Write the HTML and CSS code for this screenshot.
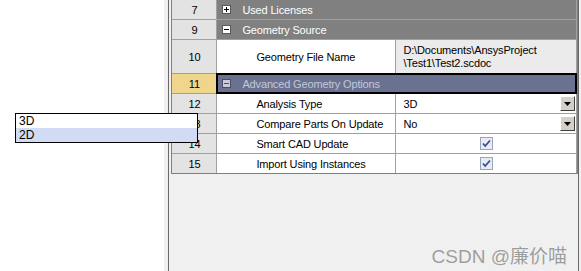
FILE: index.html
```html
<!DOCTYPE html>
<html lang="en">
<head>
    <meta charset="UTF-8">
    <title>Geometry Properties</title>
    <link rel="stylesheet" href="styles.css">
</head>
<body>
    <div class="page">
        <div class="blank"></div>
        <div class="gutter"></div>
        <div class="panel">
            <div class="grid">
                <div class="num">7</div>
                <div class="group">
                    <svg class="toggle" width="9" height="9" viewBox="0 0 9 9"><rect x="0.5" y="0.5" width="8" height="8" fill="#fff" stroke="#5a5a5a"/><path d="M2 4.5h5M4.5 2v5" stroke="#000"/></svg>
                    Used Licenses
                </div>

                <div class="num">9</div>
                <div class="group">
                    <svg class="toggle" width="9" height="9" viewBox="0 0 9 9"><rect x="0.5" y="0.5" width="8" height="8" fill="#fff" stroke="#5a5a5a"/><path d="M2 4.5h5" stroke="#000"/></svg>
                    Geometry Source
                </div>

                <div class="num">10</div>
                <div class="name">Geometry File Name</div>
                <div class="value readonly">D:\Documents\AnsysProject<br>\Test1\Test2.scdoc</div>

                <div class="num current">11</div>
                <div class="group selected">
                    <svg class="toggle" width="9" height="9" viewBox="0 0 9 9"><rect x="0.5" y="0.5" width="8" height="8" fill="#c9ccd8" stroke="#4a4f66"/><path d="M2 4.5h5" stroke="#4a4f66"/></svg>
                    Advanced Geometry Options
                </div>

                <div class="num">12</div>
                <div class="name">Analysis Type</div>
                <div class="value">3D<span class="drop"><svg width="7" height="4" viewBox="0 0 7 4"><path d="M0 0h7L3.5 4z" fill="#000"/></svg></span></div>

                <div class="num">13</div>
                <div class="name">Compare Parts On Update</div>
                <div class="value">No<span class="drop"><svg width="7" height="4" viewBox="0 0 7 4"><path d="M0 0h7L3.5 4z" fill="#000"/></svg></span></div>

                <div class="num">14</div>
                <div class="name">Smart CAD Update</div>
                <div class="value center">
                    <svg width="13" height="13" viewBox="0 0 13 13"><rect x="0.5" y="0.5" width="12" height="12" fill="#e9ebf2" stroke="#9aa3b8"/><path d="M3 6.5l2.2 2.5L10 3.5" fill="none" stroke="#2f4f9e" stroke-width="1.8"/></svg>
                </div>

                <div class="num">15</div>
                <div class="name">Import Using Instances</div>
                <div class="value center">
                    <svg width="13" height="13" viewBox="0 0 13 13"><rect x="0.5" y="0.5" width="12" height="12" fill="#e9ebf2" stroke="#9aa3b8"/><path d="M3 6.5l2.2 2.5L10 3.5" fill="none" stroke="#2f4f9e" stroke-width="1.8"/></svg>
                </div>
            </div>
            <div class="watermark">CSDN @廉价喵</div>
        </div>
        <div class="edge"></div>

        <!-- open list of the Analysis Type cell -->
        <ul class="popup">
            <li>3D</li>
            <li class="hover">2D</li>
        </ul>
    </div>
</body>
</html>
```

FILE: styles.css
```css
body {
    margin: 0;
    font-family: "Liberation Sans", Arial, sans-serif;
    font-size: 11px;
    color: #000;
}

.page {
    position: relative;
    display: flex;
    width: 581px;
    height: 271px;
    overflow: hidden;
}

.blank {
    width: 165px;
    background: #fff;
}
.gutter {
    width: 4px;
    background: #f0f0f0;
}

.panel {
    display: flex;
    flex-direction: column;
    width: 408px;
    background: #f0f0f0;
    border-left: 1px solid #6a6a6a;
    border-right: 1px solid #6a6a6a;
    padding-left: 2px;
}
.edge {
    width: 2px;
    background: #f0f0f0;
}

.grid {
    display: grid;
    grid-template-columns: 44px 178px 180px;
    grid-template-rows: 19px 19px 33px 19px 19px 19px 19px 19px;
    gap: 1px;
    margin-top: -1px;
    background: #a0a0a0;
    border: 1px solid #808080;
}
.grid > div {
    display: flex;
    align-items: center;
    white-space: nowrap;
    letter-spacing: -0.15px;
}

.num {
    justify-content: center;
    background: #e3e3e3;
}
.num.current {
    background: #f0d58c;
}

.group {
    grid-column: span 2;
    gap: 11px;
    padding-left: 5px;
    background: #808080;
    color: #fff;
}
.group.selected {
    background: #6a7290;
    color: #c3c8dc;
    box-shadow: 0 0 0 1px #000, inset 0 0 0 1px #000;
}

.name {
    padding-left: 39px;
    background: #fff;
}

.value {
    position: relative;
    padding-left: 7px;
    background: #fff;
}
.value.readonly {
    background: #ebebeb;
    line-height: 13px;
}
.value.center {
    justify-content: center;
    padding-left: 0;
}

.drop {
    position: absolute;
    right: 1px;
    top: 2px;
    width: 13px;
    height: 13px;
    display: flex;
    align-items: center;
    justify-content: center;
    background: #d4d0c8;
    border: 1px solid;
    border-color: #fff #404040 #404040 #fff;
}

.watermark {
    margin-top: auto;
    margin-bottom: 3px;
    align-self: flex-end;
    margin-right: 11px;
    font-family: "Liberation Sans", "Noto Sans CJK SC", sans-serif;
    font-size: 19px;
    color: #9c9c9c;
    text-shadow: 0 0 1px #fff;
}

.popup {
    position: absolute;
    left: 15px;
    top: 113px;
    width: 181px;
    margin: 0;
    padding: 0;
    list-style: none;
    background: #fff;
    border: 1px solid #000;
    font-size: 12px;
}
.popup li {
    height: 14px;
    line-height: 14px;
    padding-left: 3px;
}
.popup li.hover {
    background: #d1dbf4;
}
```
